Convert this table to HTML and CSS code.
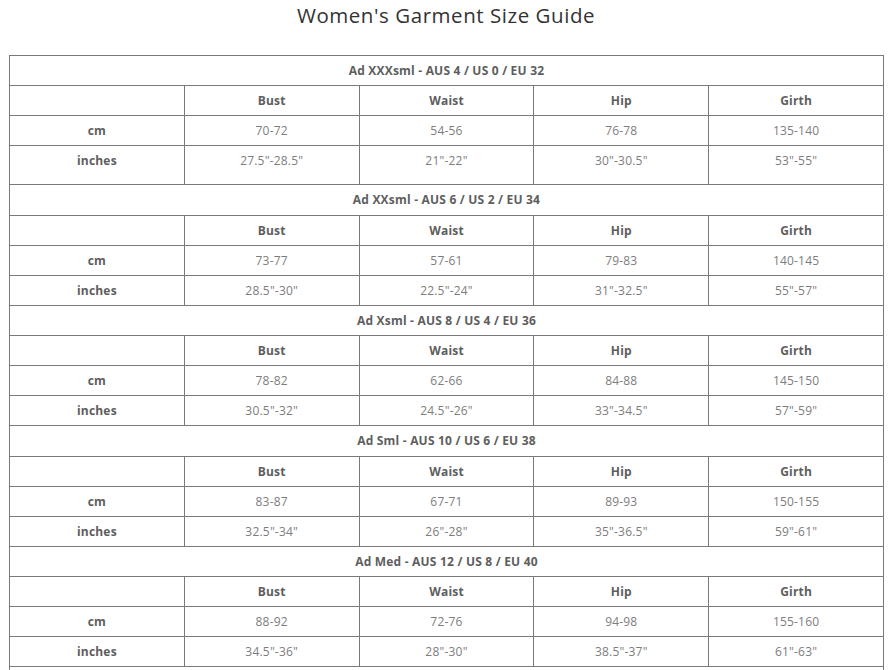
FILE: index.html
```html
<!DOCTYPE html>
<html lang="en">
<head>
<meta charset="utf-8">
<title>Women's Garment Size Guide</title>
<link rel="stylesheet" href="styles.css">
</head>
<body>
<div class="page">
  <h1 class="title">Women's Garment Size Guide</h1>
  <table class="guide">
    <colgroup><col><col><col><col><col></colgroup>
    <tbody>
      <tr class="sec"><th colspan="5">Ad XXXsml - AUS 4 / US 0 / EU 32</th></tr>
      <tr class="hdr"><td></td><th>Bust</th><th>Waist</th><th>Hip</th><th>Girth</th></tr>
      <tr><th>cm</th><td>70-72</td><td>54-56</td><td>76-78</td><td>135-140</td></tr>
      <tr class="tall"><th>inches</th><td>27.5"-28.5"</td><td>21"-22"</td><td>30"-30.5"</td><td>53"-55"</td></tr>

      <tr class="sec"><th colspan="5">Ad XXsml - AUS 6 / US 2 / EU 34</th></tr>
      <tr class="hdr"><td></td><th>Bust</th><th>Waist</th><th>Hip</th><th>Girth</th></tr>
      <tr><th>cm</th><td>73-77</td><td>57-61</td><td>79-83</td><td>140-145</td></tr>
      <tr><th>inches</th><td>28.5"-30"</td><td>22.5"-24"</td><td>31"-32.5"</td><td>55"-57"</td></tr>

      <tr class="sec"><th colspan="5">Ad Xsml - AUS 8 / US 4 / EU 36</th></tr>
      <tr class="hdr"><td></td><th>Bust</th><th>Waist</th><th>Hip</th><th>Girth</th></tr>
      <tr><th>cm</th><td>78-82</td><td>62-66</td><td>84-88</td><td>145-150</td></tr>
      <tr><th>inches</th><td>30.5"-32"</td><td>24.5"-26"</td><td>33"-34.5"</td><td>57"-59"</td></tr>

      <tr class="sec"><th colspan="5">Ad Sml - AUS 10 / US 6 / EU 38</th></tr>
      <tr class="hdr"><td></td><th>Bust</th><th>Waist</th><th>Hip</th><th>Girth</th></tr>
      <tr><th>cm</th><td>83-87</td><td>67-71</td><td>89-93</td><td>150-155</td></tr>
      <tr><th>inches</th><td>32.5"-34"</td><td>26"-28"</td><td>35"-36.5"</td><td>59"-61"</td></tr>

      <tr class="sec"><th colspan="5">Ad Med - AUS 12 / US 8 / EU 40</th></tr>
      <tr class="hdr"><td></td><th>Bust</th><th>Waist</th><th>Hip</th><th>Girth</th></tr>
      <tr><th>cm</th><td>88-92</td><td>72-76</td><td>94-98</td><td>155-160</td></tr>
      <tr><th>inches</th><td>34.5"-36"</td><td>28"-30"</td><td>38.5"-37"</td><td>61"-63"</td></tr>

      <tr class="sec"><th colspan="5"></th></tr>
    </tbody>
  </table>
</div>
</body>
</html>
```

FILE: styles.css
```css
html, body {
  margin: 0;
  padding: 0;
  background: #ffffff;
}

.page {
  padding: 0 5px 0 9px;
  font-family: "Open Sans", "Liberation Sans", sans-serif;
}

.title {
  margin: 0;
  height: 55px;
  padding-top: 2px;
  box-sizing: border-box;
  text-align: center;
  font-family: "Open Sans", "Liberation Sans", sans-serif;
  font-weight: 400;
  font-size: 20.5px;
  line-height: 26px;
  color: #333333;
  letter-spacing: 0.55px;
}

.guide {
  width: 875px;
  border-collapse: collapse;
  table-layout: fixed;
}

.guide th,
.guide td {
  border: 1px solid #7a7a7a;
  height: 29.125px;
  padding: 0;
  text-align: center;
  vertical-align: top;
  font-size: 12px;
  line-height: 29px;
  letter-spacing: 0.2px;
}

.guide th {
  font-weight: 700;
  color: #5e5e5e;
}

.guide td {
  font-weight: 400;
  color: #7d7d7d;
}

.guide tr.tall th,
.guide tr.tall td {
  height: 38px;
}
```
